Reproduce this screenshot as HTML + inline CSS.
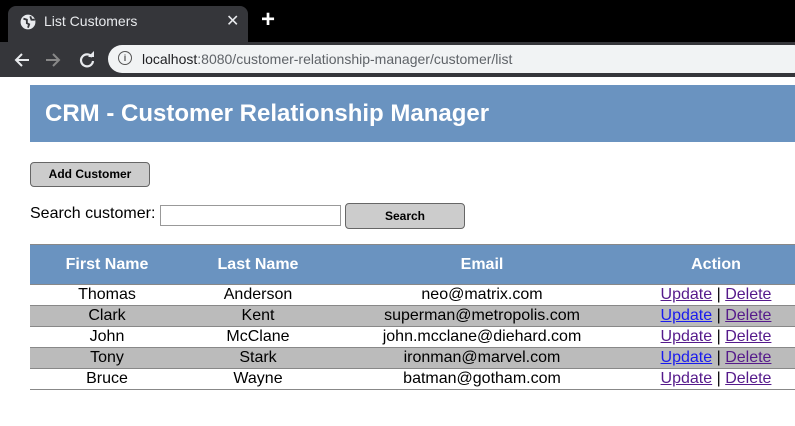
<!DOCTYPE html>
<html><head><style>
body{margin:0;width:795px;height:426px;overflow:hidden;background:#fff;font-family:"Liberation Sans",sans-serif;position:relative}
.tabbar{position:absolute;left:0;top:0;width:795px;height:42px;background:#000}
.tab{position:absolute;left:8px;top:6px;width:240px;height:36px;background:#35363a;border-radius:8px 8px 0 0;color:#e8eaed;font-size:14px}
.toolbar{position:absolute;left:0;top:42px;width:795px;height:35px;background:#35363a}
.url{position:absolute;left:108px;top:3px;width:700px;height:28px;background:#f1f3f4;border-radius:14px;font-size:14px;color:#202124}
.hdr{position:absolute;left:30px;top:85px;width:765px;height:57px;background:#6a93c0;color:#fff;font-weight:bold;font-size:24px;line-height:57px;box-sizing:border-box;padding-left:15px}
.btn{position:absolute;background:#ccc;border:1px solid #666;border-radius:4px;font-weight:bold;font-size:12px;text-align:center;box-sizing:border-box;color:#000}
table{position:absolute;left:30px;top:244px;width:770px;border-collapse:collapse;font-size:16px}
th{background:#6a93c0;color:#fff;height:39px;padding:0;border-top:1px solid #888;border-bottom:1px solid #888}
td{text-align:center;height:20px;padding:0;border-bottom:1px solid #888;line-height:20px}
tr.g td{background:#bbb}
a{color:#551a8b}
a.b{color:#1a1aee}
</style></head><body>
<div class="tabbar"><div class="tab">
<svg style="position:absolute;left:12px;top:8px" width="16" height="16" viewBox="0 0 14 14"><circle cx="7" cy="7" r="6.5" fill="#e8eaed"/><path d="M3 4l3 1 0 3 2 1-1 3M9 2l1 3 3 0" stroke="#35363a" stroke-width="1.6" fill="none"/></svg>
<span style="position:absolute;left:36px;top:7px">List Customers</span>
<span style="position:absolute;left:218px;top:5px;font-size:16px">✕</span></div>
<span style="position:absolute;left:261px;top:6px;color:#fff;font-size:24px;font-weight:bold">+</span></div>
<div class="toolbar">
<svg style="position:absolute;left:13px;top:9px" width="18" height="18" viewBox="0 0 18 18"><path d="M16 9H3M9 3L3 9l6 6" stroke="#e8eaed" stroke-width="2" fill="none"/></svg>
<svg style="position:absolute;left:44px;top:9px" width="18" height="18" viewBox="0 0 18 18"><path d="M2 9h13M9 3l6 6-6 6" stroke="#888" stroke-width="2" fill="none"/></svg>
<svg style="position:absolute;left:78px;top:9px" width="18" height="18" viewBox="0 0 18 18"><path d="M14 6A6 6 0 1 0 15 10" stroke="#e8eaed" stroke-width="2.2" fill="none"/><path d="M10 6h6V0z" fill="#e8eaed"/></svg>
<div class="url"><span style="position:absolute;left:10px;top:6px;width:12px;height:12px;border:1.5px solid #555;border-radius:50%;font-size:9px;text-align:center;line-height:12px;color:#555;font-weight:bold">i</span>
<span style="position:absolute;left:34px;top:6px">localhost<span style="color:#5f6368">:8080/customer-relationship-manager/customer/list</span></span></div></div>
<div class="hdr">CRM - Customer Relationship Manager</div>
<div class="btn" style="left:30px;top:162px;width:120px;height:25px;line-height:23px">Add Customer</div>
<span style="position:absolute;left:30px;top:205px;font-size:16px">Search customer:</span>
<div style="position:absolute;left:160px;top:205px;width:181px;height:21px;border:1px solid #999;box-sizing:border-box"></div>
<div class="btn" style="left:345px;top:203px;width:120px;height:26px;line-height:24px">Search</div>
<table>
<tr><th style="width:154px">First Name</th><th style="width:148px">Last Name</th><th style="width:300px">Email</th><th>Action</th></tr>
<tr><td>Thomas</td><td>Anderson</td><td>neo@matrix.com</td><td><a href="#">Update</a> | <a href="#">Delete</a></td></tr>
<tr class="g"><td>Clark</td><td>Kent</td><td>superman@metropolis.com</td><td><a class="b" href="#">Update</a> | <a href="#">Delete</a></td></tr>
<tr><td>John</td><td>McClane</td><td>john.mcclane@diehard.com</td><td><a href="#">Update</a> | <a href="#">Delete</a></td></tr>
<tr class="g"><td>Tony</td><td>Stark</td><td>ironman@marvel.com</td><td><a class="b" href="#">Update</a> | <a href="#">Delete</a></td></tr>
<tr><td>Bruce</td><td>Wayne</td><td>batman@gotham.com</td><td><a href="#">Update</a> | <a href="#">Delete</a></td></tr>
</table>
</body></html>
